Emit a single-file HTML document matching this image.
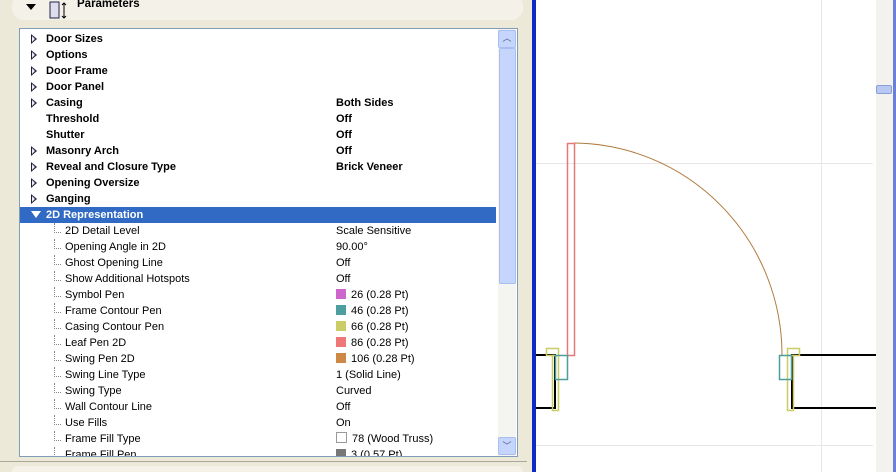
<!DOCTYPE html><html><head><style>
html,body{margin:0;width:896px;height:472px;overflow:hidden}
body{background:#ECE9D8;position:relative;font-family:"Liberation Sans",Arial,sans-serif;font-size:11px}
.a{position:absolute}
.row{position:absolute;left:0;width:476px;height:16px;line-height:16px;font-size:11px;color:#000}
.b{font-weight:bold}
.tri{position:absolute;left:11px;top:3px;width:0;height:0;border-left:6px solid #223;border-top:5px solid transparent;border-bottom:5px solid transparent}
.tri:after{content:"";position:absolute;left:-5px;top:-3px;border-left:3px solid #E8ECFF;border-top:3px solid transparent;border-bottom:3px solid transparent}
.v{position:absolute;left:316px;top:0}
.sw{display:inline-block;width:10px;height:10px;vertical-align:-1px;margin-right:5px}
.dot{position:absolute;left:34px;top:0;width:6px;height:9px;border-left:1px dotted #888;border-bottom:1px dotted #888}
</style></head><body>
<div class="a" style="left:12px;top:-6px;width:511px;height:26px;background:#F4F2E8;border-radius:12px"></div>
<div class="a" style="left:26px;top:4px;border-top:6px solid #000;border-left:5px solid transparent;border-right:5px solid transparent"></div>
<svg class="a" style="left:48px;top:0" width="22" height="20"><rect x="2" y="2" width="9" height="16" fill="#dde" stroke="#224" stroke-width="1"/><line x1="16" y1="3" x2="16" y2="18" stroke="#000"/><path d="M14 5 16 3 18 5M14 16 16 18 18 16" fill="none" stroke="#000"/></svg>
<div class="a b" style="left:77px;top:-2px;font-size:11.5px">Parameters</div>
<div class="a" style="left:19px;top:28px;width:497px;height:427px;background:#fff;border:1px solid #7F9DB9;overflow:hidden">
<div class="a" style="left:0;top:0;width:497px;height:427px">
<div class="row b" style="top:2px"><span class="tri"></span><span style="position:absolute;left:26px">Door Sizes</span></div>
<div class="row b" style="top:18px"><span class="tri"></span><span style="position:absolute;left:26px">Options</span></div>
<div class="row b" style="top:34px"><span class="tri"></span><span style="position:absolute;left:26px">Door Frame</span></div>
<div class="row b" style="top:50px"><span class="tri"></span><span style="position:absolute;left:26px">Door Panel</span></div>
<div class="row b" style="top:66px"><span class="tri"></span><span style="position:absolute;left:26px">Casing</span><span class="v">Both Sides</span></div>
<div class="row b" style="top:82px"><span style="position:absolute;left:26px">Threshold</span><span class="v">Off</span></div>
<div class="row b" style="top:98px"><span style="position:absolute;left:26px">Shutter</span><span class="v">Off</span></div>
<div class="row b" style="top:114px"><span class="tri"></span><span style="position:absolute;left:26px">Masonry Arch</span><span class="v">Off</span></div>
<div class="row b" style="top:130px"><span class="tri"></span><span style="position:absolute;left:26px">Reveal and Closure Type</span><span class="v">Brick Veneer</span></div>
<div class="row b" style="top:146px"><span class="tri"></span><span style="position:absolute;left:26px">Opening Oversize</span></div>
<div class="row b" style="top:162px"><span class="tri"></span><span style="position:absolute;left:26px">Ganging</span></div>
<div class="row b" style="top:178px;background:#316AC5;color:#fff"><span style="position:absolute;left:11px;top:4px;border-top:7px solid #fff;border-left:5px solid transparent;border-right:5px solid transparent"></span><span style="position:absolute;left:26px">2D Representation</span></div>
<div class="row" style="top:194px"><span class="dot"></span><span style="position:absolute;left:45px">2D Detail Level</span><span class="v">Scale Sensitive</span></div>
<div class="row" style="top:210px"><span class="dot"></span><span style="position:absolute;left:45px">Opening Angle in 2D</span><span class="v">90.00°</span></div>
<div class="row" style="top:226px"><span class="dot"></span><span style="position:absolute;left:45px">Ghost Opening Line</span><span class="v">Off</span></div>
<div class="row" style="top:242px"><span class="dot"></span><span style="position:absolute;left:45px">Show Additional Hotspots</span><span class="v">Off</span></div>
<div class="row" style="top:258px"><span class="dot"></span><span style="position:absolute;left:45px">Symbol Pen</span><span class="v"><span class="sw" style="background:#CC66CC"></span>26 (0.28 Pt)</span></div>
<div class="row" style="top:274px"><span class="dot"></span><span style="position:absolute;left:45px">Frame Contour Pen</span><span class="v"><span class="sw" style="background:#4D9E9E"></span>46 (0.28 Pt)</span></div>
<div class="row" style="top:290px"><span class="dot"></span><span style="position:absolute;left:45px">Casing Contour Pen</span><span class="v"><span class="sw" style="background:#CCCC66"></span>66 (0.28 Pt)</span></div>
<div class="row" style="top:306px"><span class="dot"></span><span style="position:absolute;left:45px">Leaf Pen 2D</span><span class="v"><span class="sw" style="background:#EE7777"></span>86 (0.28 Pt)</span></div>
<div class="row" style="top:322px"><span class="dot"></span><span style="position:absolute;left:45px">Swing Pen 2D</span><span class="v"><span class="sw" style="background:#CC8844"></span>106 (0.28 Pt)</span></div>
<div class="row" style="top:338px"><span class="dot"></span><span style="position:absolute;left:45px">Swing Line Type</span><span class="v">1 (Solid Line)</span></div>
<div class="row" style="top:354px"><span class="dot"></span><span style="position:absolute;left:45px">Swing Type</span><span class="v">Curved</span></div>
<div class="row" style="top:370px"><span class="dot"></span><span style="position:absolute;left:45px">Wall Contour Line</span><span class="v">Off</span></div>
<div class="row" style="top:386px"><span class="dot"></span><span style="position:absolute;left:45px">Use Fills</span><span class="v">On</span></div>
<div class="row" style="top:402px"><span class="dot"></span><span style="position:absolute;left:45px">Frame Fill Type</span><span class="v"><span class="sw" style="background:#fff;border:1px solid #999;width:9px;height:9px"></span>78 (Wood Truss)</span></div>
<div class="row" style="top:418px"><span class="dot"></span><span style="position:absolute;left:45px">Frame Fill Pen</span><span class="v"><span class="sw" style="background:#777"></span>3 (0.57 Pt)</span></div>
</div>
<div class="a" style="left:478px;top:0;width:18px;height:427px;background:#F4F4F0"></div>
<div class="a" style="left:478px;top:1px;width:16px;height:16px;background:#C5D5FB;border:1px solid #A8BEF0;border-radius:2px;text-align:center;line-height:14px;color:#4D6185;font-size:9px">︿</div>
<div class="a" style="left:479px;top:19px;width:15px;height:234px;background:#C5D5FB;border:1px solid #A8BEF0;border-radius:2px"></div>
<div class="a" style="left:478px;top:408px;width:16px;height:16px;background:#C5D5FB;border:1px solid #A8BEF0;border-radius:2px;text-align:center;line-height:16px;color:#4D6185;font-size:9px">﹀</div>
</div>
<div class="a" style="left:0;top:461px;width:527px;height:1px;background:#ACA899"></div>
<div class="a" style="left:12px;top:466px;width:511px;height:12px;background:#F4F2E8;border-radius:6px 6px 0 0"></div>
<div class="a" style="left:532px;top:0;width:4px;height:472px;background:#0A2BC8"></div>
<div class="a" style="left:536px;top:0;width:340px;height:472px;background:#fff"></div>
<div class="a" style="left:876px;top:0;width:17px;height:472px;background:#F4F2EE"></div>
<div class="a" style="left:876px;top:85px;width:14px;height:7px;background:#B8C8F0;border:1px solid #8CA0D8;border-radius:2px"></div>
<div class="a" style="left:893px;top:0;width:3px;height:472px;background:#6A7FD8"></div>
<svg class="a" style="left:0;top:0" width="896" height="472">
<line x1="821.5" y1="0" x2="821.5" y2="472" stroke="#e6e6e6"/>
<line x1="536" y1="163.5" x2="873" y2="163.5" stroke="#e6e6e6"/>
<line x1="536" y1="445.5" x2="873" y2="445.5" stroke="#e6e6e6"/>
<path d="M574 143 A210 212 0 0 1 782 355" fill="none" stroke="#B07A3C"/>
<rect x="567.5" y="143.5" width="7" height="212" fill="none" stroke="#E87878" stroke-width="1.5"/>
<path d="M536 355H555V408H536M876 355H792V408H876" fill="none" stroke="#000" stroke-width="2"/>
<rect x="546.5" y="348.5" width="12" height="7" fill="none" stroke="#CCCC66" stroke-width="1.5"/>
<rect x="552.5" y="355.5" width="6" height="55" fill="none" stroke="#CCCC66" stroke-width="1.5"/>
<rect x="787.5" y="348.5" width="12" height="7" fill="none" stroke="#CCCC66" stroke-width="1.5"/>
<rect x="787.5" y="355.5" width="6" height="55" fill="none" stroke="#CCCC66" stroke-width="1.5"/>
<rect x="555.5" y="355.5" width="12" height="24" fill="none" stroke="#4D9E9E" stroke-width="1.5"/>
<rect x="779.5" y="355.5" width="12" height="24" fill="none" stroke="#4D9E9E" stroke-width="1.5"/>
</svg>
</body></html>
